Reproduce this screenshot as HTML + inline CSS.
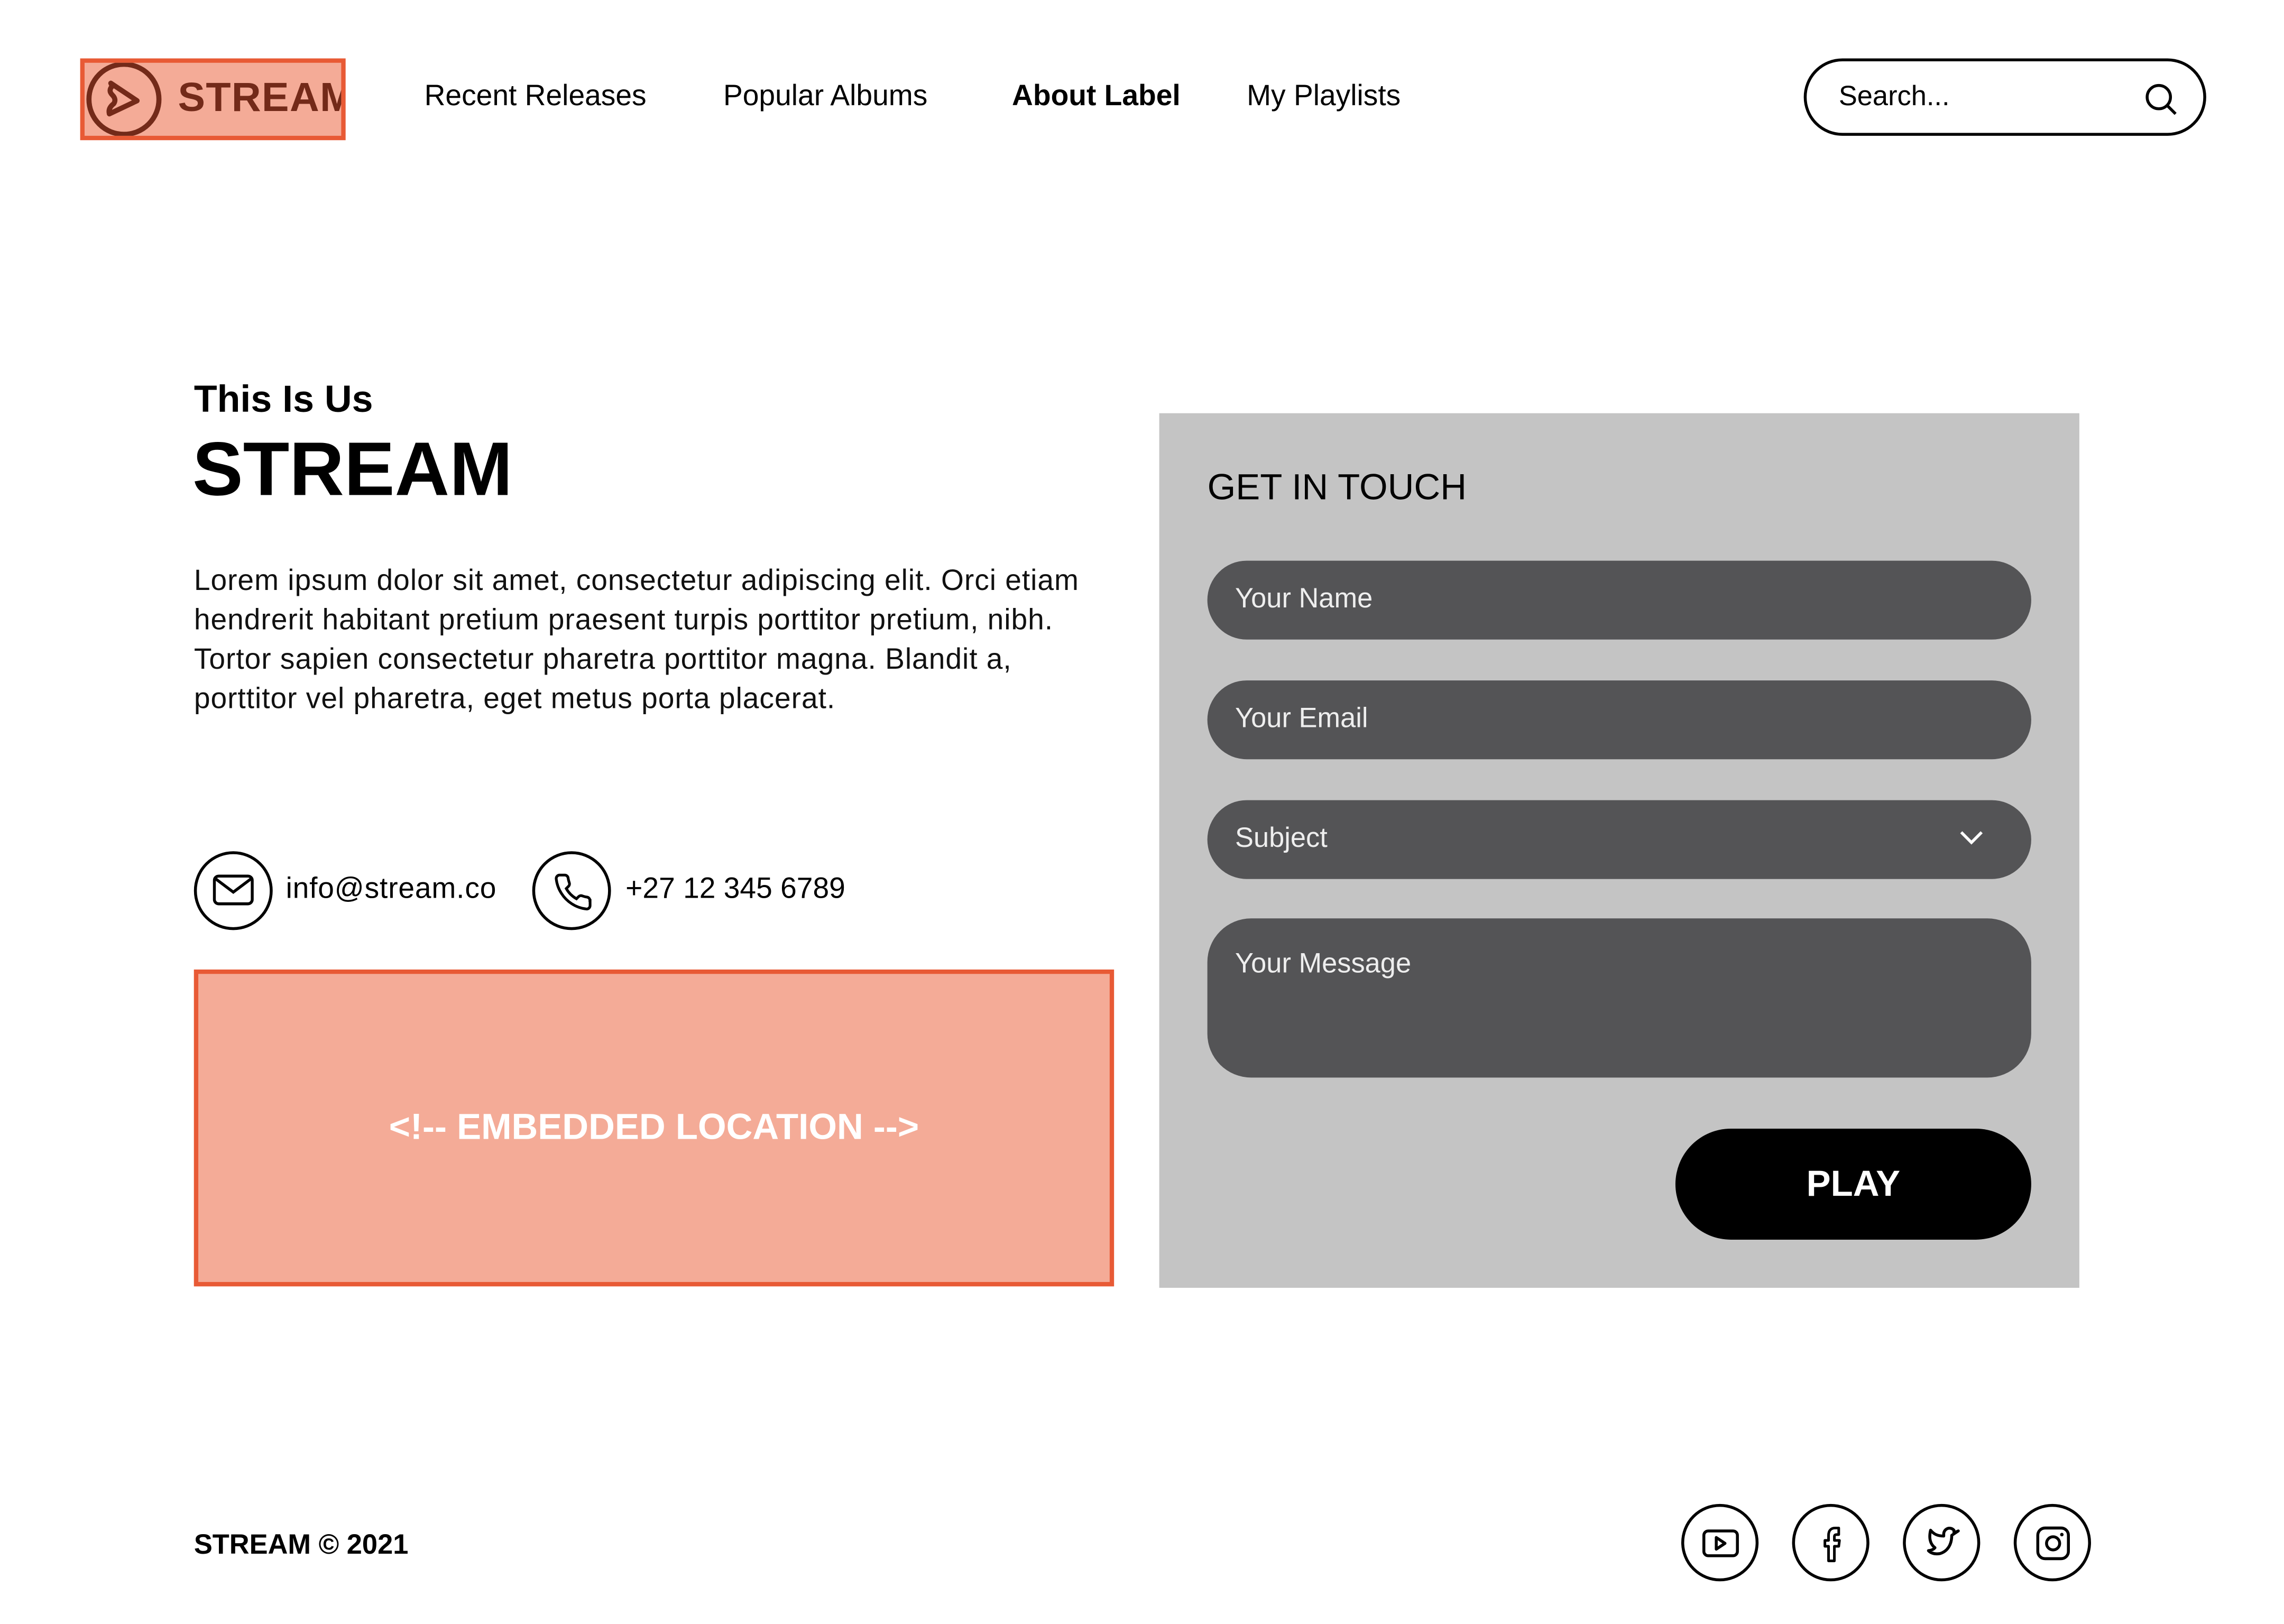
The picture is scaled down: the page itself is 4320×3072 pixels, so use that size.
<!DOCTYPE html>
<html><head><meta charset="utf-8"><style>
*{margin:0;padding:0;box-sizing:border-box}
html,body{width:4320px;height:3072px;overflow:hidden;background:#fff}
#s{position:absolute;left:0;top:0;width:1552px;height:1104px;transform:scale(2.758,2.762);transform-origin:0 0;font-family:"Liberation Sans",sans-serif;color:#000}
.a{position:absolute}
.nav{top:55px;font-size:20px;white-space:nowrap}
.inp{position:absolute;left:828px;width:565px;height:54px;background:#545456;border-radius:27px;color:#eee;font-size:19px;padding:16px 0 0 19px}
.soc{position:absolute;top:1030px;width:53px;height:53px;border:2px solid #000;border-radius:50%}
.soc svg{position:absolute;left:12px;top:12px}
</style></head><body><div id="s">
<div class="a" style="left:55px;top:40px;width:182px;height:56px;border:3px solid #e85a35;background:#f4ab97;overflow:hidden">
<svg class="a" style="left:0;top:-3px" width="60" height="56" viewBox="0 0 60 56"><circle cx="27" cy="28" r="24" fill="none" stroke="#732a19" stroke-width="3.5"/><path d="M18 17 L36 29 L17 38 Q16 34 20 31 Q22 28 19 25 Q16 22 19 19 Z" fill="none" stroke="#732a19" stroke-width="3.5" stroke-linejoin="round"/></svg>
<div class="a" style="left:64px;top:8px;font-size:28px;font-weight:bold;color:#732a19;letter-spacing:0.5px">STREAM</div>
</div>
<div class="a nav" style="left:291px">Recent Releases</div>
<div class="a nav" style="left:496px">Popular Albums</div>
<div class="a nav" style="left:694px;font-weight:bold">About Label</div>
<div class="a nav" style="left:855px">My Playlists</div>
<div class="a" style="left:1237px;top:40px;width:276px;height:53px;border:2px solid #000;border-radius:27px">
<div class="a" style="left:22px;top:14px;font-size:19px">Search...</div>
<svg class="a" style="left:231px;top:14px" width="24" height="24" viewBox="0 0 24 24"><circle cx="10.5" cy="10.5" r="8" fill="none" stroke="#000" stroke-width="2"/><path d="M16.5 16.5L22 22" stroke="#000" stroke-width="2"/></svg>
</div>
<div class="a" style="left:133px;top:258px;font-size:26px;font-weight:bold">This Is Us</div>
<div class="a" style="left:132px;top:292px;font-size:52px;font-weight:bold">STREAM</div>
<div class="a" style="left:133px;top:385px;width:660px;font-size:20px;letter-spacing:0.35px;line-height:27px;color:#111;white-space:nowrap">Lorem ipsum dolor sit amet, consectetur adipiscing elit. Orci etiam<br>hendrerit habitant pretium praesent turpis porttitor pretium, nibh.<br>Tortor sapien consectetur pharetra porttitor magna. Blandit a,<br>porttitor vel pharetra, eget metus porta placerat.</div>
<div class="a" style="left:133px;top:583px;width:54px;height:54px;border:2px solid #000;border-radius:50%"><svg class="a" style="left:11px;top:13px" width="28" height="24" viewBox="0 0 28 24"><rect x="1" y="2" width="26" height="19" rx="3" fill="none" stroke="#000" stroke-width="2"/><path d="M2 4l12 9 12-9" fill="none" stroke="#000" stroke-width="2"/></svg></div>
<div class="a" style="left:196px;top:598px;font-size:20px;letter-spacing:0.3px">info@stream.co</div>
<div class="a" style="left:365px;top:583px;width:54px;height:54px;border:2px solid #000;border-radius:50%"><svg class="a" style="left:12px;top:12px" width="28" height="28" viewBox="0 0 24 24"><path d="M22 16.9v3a2 2 0 0 1-2.2 2 19.8 19.8 0 0 1-8.6-3.1 19.5 19.5 0 0 1-6-6A19.8 19.8 0 0 1 2.1 4.2 2 2 0 0 1 4.1 2h3a2 2 0 0 1 2 1.7c.1 1 .4 1.9.7 2.8a2 2 0 0 1-.5 2.1L8 9.9a16 16 0 0 0 6 6l1.3-1.3a2 2 0 0 1 2.1-.4c.9.3 1.8.6 2.8.7a2 2 0 0 1 1.7 2z" fill="none" stroke="#000" stroke-width="1.6"/></svg></div>
<div class="a" style="left:429px;top:598px;font-size:20px">+27 12 345 6789</div>
<div class="a" style="left:133px;top:664px;width:631px;height:217px;border:3px solid #e85a35;background:#f4ab97;color:#fff;font-weight:bold;font-size:25px;text-align:center;line-height:211px">&lt;!-- EMBEDDED LOCATION --&gt;</div>
<div class="a" style="left:795px;top:283px;width:631px;height:599px;background:#c4c4c4"></div>
<div class="a" style="left:828px;top:320px;font-size:25px">GET IN TOUCH</div>
<div class="inp" style="top:384px">Your Name</div>
<div class="inp" style="top:466px">Your Email</div>
<div class="inp" style="top:548px">Subject<svg class="a" style="left:515px;top:20px" width="18" height="12" viewBox="0 0 18 12"><path d="M2 2l7 7 7-7" fill="none" stroke="#fff" stroke-width="2"/></svg></div>
<div class="inp" style="top:629px;height:109px;border-radius:30px;padding-top:21px">Your Message</div>
<div class="a" style="left:1149px;top:773px;width:244px;height:76px;background:#000;border-radius:38px;color:#fff;font-weight:bold;font-size:25px;text-align:center;line-height:76px">PLAY</div>
<div class="a" style="left:133px;top:1048px;font-size:19px;font-weight:bold">STREAM © 2021</div>
<div class="soc" style="left:1153px"><svg width="26" height="26" viewBox="0 0 26 26"><rect x="1.5" y="4.5" width="23" height="17" rx="3" fill="none" stroke="#000" stroke-width="2"/><path d="M10 9v8l6-4z" fill="none" stroke="#000" stroke-width="2" stroke-linejoin="round"/></svg></div>
<div class="soc" style="left:1229px"><svg width="26" height="26" viewBox="0 0 26 26"><path d="M15 25V15h3l.5-4H15V8.5c0-1 .4-1.5 1.5-1.5H18V2.5h-2.5C12.5 2.5 11 4.5 11 7.5V11H8.5v4H11v10z" fill="none" stroke="#000" stroke-width="1.8" stroke-linejoin="round"/></svg></div>
<div class="soc" style="left:1305px"><svg width="26" height="26" viewBox="0 0 26 26"><path d="M24 4.5a10 10 0 0 1-3 1V4a4 4 0 0 0-7 3v1C9.5 8 7 6.5 5 4c-1 4-1 9 3 12-1 1.2-2.5 1.8-4.5 2 2 2 5 2.5 8 2 5-1.5 8-6 8-12.5z" fill="none" stroke="#000" stroke-width="2" stroke-linejoin="round"/></svg></div>
<div class="soc" style="left:1381px"><svg width="26" height="26" viewBox="0 0 26 26"><rect x="2.5" y="2.5" width="21" height="21" rx="5" fill="none" stroke="#000" stroke-width="2"/><circle cx="13" cy="13" r="4.5" fill="none" stroke="#000" stroke-width="2"/><circle cx="19" cy="7" r="1.2"/></svg></div>
</div></body></html>
